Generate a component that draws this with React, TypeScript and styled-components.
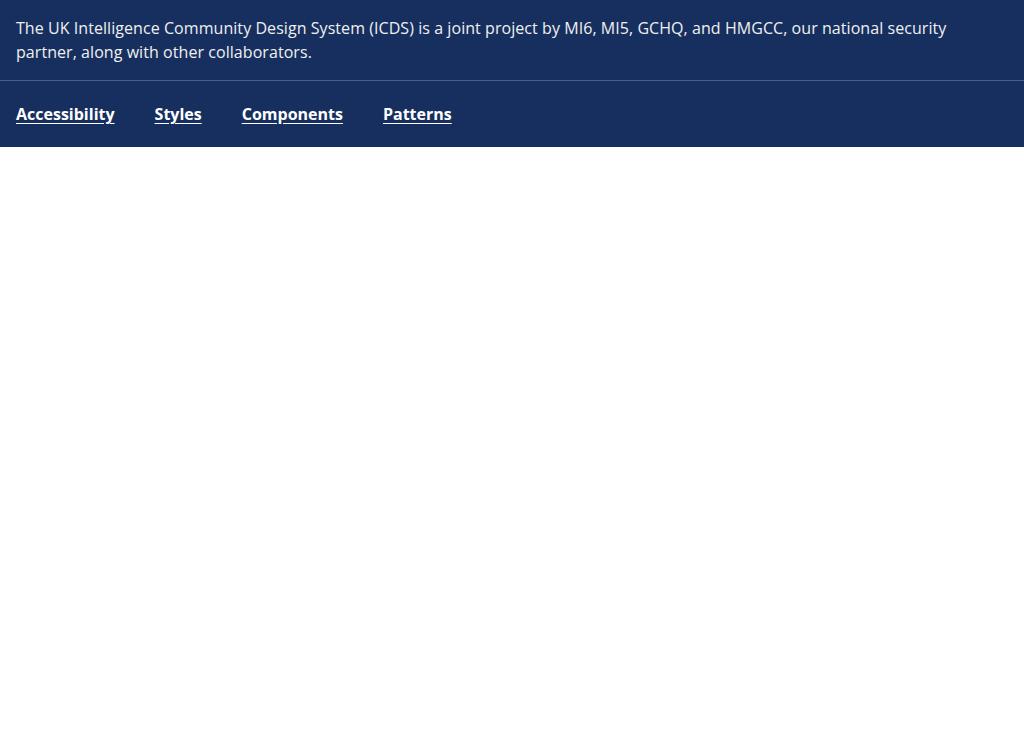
import styled, { createGlobalStyle } from "styled-components";

const GlobalStyle = createGlobalStyle`
  body {
    margin: 0;
    background: #ffffff;
    font-family: "Open Sans", "Liberation Sans", sans-serif;
  }
`;

const Banner = styled.header`
  background-color: #172f5f;
  color: #f0f0f0;
`;

const IntroRow = styled.div`
  padding: 16px;
  border-bottom: 1px solid #4b5d82;
`;

const Intro = styled.p`
  margin: 0;
  font-size: 16px;
  line-height: 24px;
  letter-spacing: 0.06px;
  max-width: 960px;
`;

const Nav = styled.nav`
  display: flex;
  align-items: center;
  gap: 40px;
  padding: 21px 16px;
`;

const NavLink = styled.a`
  color: #ffffff;
  font-size: 16px;
  line-height: 24px;
  font-weight: 700;
  text-decoration: underline;
  text-underline-offset: 3px;
  cursor: pointer;
`;

const links = ["Accessibility", "Styles", "Components", "Patterns"];

export default function App() {
  return (
    <>
      <GlobalStyle />
      <Banner>
        <IntroRow>
          <Intro>
            The UK Intelligence Community Design System (ICDS) is a joint
            project by MI6, MI5, GCHQ, and HMGCC, our national security partner,
            along with other collaborators.
          </Intro>
        </IntroRow>
        <Nav>
          {links.map((label) => (
            <NavLink key={label} href="#">
              {label}
            </NavLink>
          ))}
        </Nav>
      </Banner>
    </>
  );
}
